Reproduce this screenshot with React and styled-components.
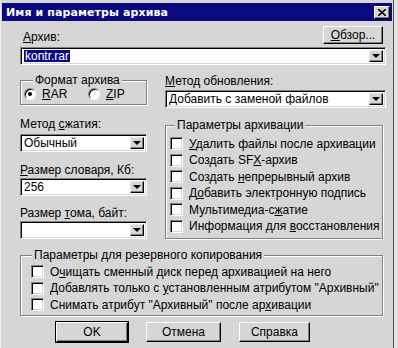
import React from "react";
import styled, { createGlobalStyle } from "styled-components";

const Global = createGlobalStyle`
  html, body { margin: 0; padding: 0; background: #e2e2e2; }
  * { box-sizing: border-box; }
`;

const Window = styled.div`
  width: 394px;
  height: 348px;
  background: #d6d6d6;
  border-left: 1px solid #f0f0f0;
  border-right: 1px solid #505050;
  padding: 3px 1px 0 1px;
  font-family: "Liberation Sans", Arial, sans-serif;
  font-size: 12px;
  color: #000;
  overflow: hidden;
`;

const TitleBar = styled.div`
  height: 18px;
  background: #0a0a80;
  display: flex;
  align-items: center;
  justify-content: space-between;
  padding: 0 2px 0 4px;
`;

const TitleText = styled.span`
  font-family: "DejaVu Sans", Verdana, sans-serif;
  font-weight: bold;
  font-size: 11px;
  color: #fff;
  letter-spacing: 0.1px;
`;

const CloseButton = styled.div`
  width: 16px;
  height: 13px;
  background: #d6d6d6;
  border: 1px solid;
  border-color: #fff #000 #000 #fff;
  box-shadow: inset -1px -1px 0 #808080;
  display: flex;
  align-items: center;
  justify-content: center;
`;

const Content = styled.div`
  padding: 0 6px 0 18px;
`;

const TopRow = styled.div`
  display: flex;
  justify-content: space-between;
  align-items: flex-end;
  margin-top: 5px;
  height: 18px;
`;

const Label = styled.div`
  padding-left: ${(p) => p.$indent || 0}px;
  line-height: 14px;
  margin-top: ${(p) => p.$mt || 0}px;
`;

const Key = styled.span`
  text-decoration: underline;
  text-underline-offset: 1px;
`;

const Button = styled.div`
  width: ${(p) => p.$w}px;
  height: ${(p) => p.$h || 20}px;
  margin-right: ${(p) => p.$mr || 0}px;
  background: #d6d6d6;
  border: 1px solid;
  border-color: #fff #000 #000 #fff;
  box-shadow: inset -1px -1px 0 #808080
    ${(p) => (p.$default ? ", 0 0 0 1px #000" : "")};
  display: flex;
  align-items: center;
  justify-content: center;
  line-height: 14px;
`;

const Field = styled.div`
  height: 18px;
  width: 100%;
  margin-top: ${(p) => p.$mt || 0}px;
  background: #fff;
  border: 1px solid;
  border-color: #808080 #fff #fff #808080;
  box-shadow: inset 1px 1px 0 #000, inset -1px -1px 0 #d6d6d6;
  display: flex;
  align-items: stretch;
  padding: 2px;
`;

const FieldValue = styled.div`
  flex: 1;
  display: flex;
  align-items: center;
  padding-left: 1px;
  white-space: nowrap;
  overflow: hidden;
`;

const Selected = styled.span`
  background: #0a0a80;
  color: #fff;
  padding: 0 1px;
  line-height: 13px;
`;

const DropButton = styled.div`
  width: 14px;
  background: #d6d6d6;
  border: 1px solid;
  border-color: #e8e8e8 #000 #000 #e8e8e8;
  box-shadow: inset -1px -1px 0 #808080;
  display: flex;
  align-items: center;
  justify-content: center;
  &::after {
    content: "";
    border-left: 4px solid transparent;
    border-right: 4px solid transparent;
    border-top: 4px solid #000;
  }
`;

const Columns = styled.div`
  display: flex;
  gap: 18px;
  margin-top: 9px;
`;

const LeftCol = styled.div`
  width: 127px;
  display: flex;
  flex-direction: column;
`;

const RightCol = styled.div`
  flex: 1;
  display: flex;
  flex-direction: column;
`;

const Group = styled.fieldset`
  margin: 0;
  margin-right: ${(p) => p.$mr || 0}px;
  margin-top: ${(p) => p.$mt || 0}px;
  min-inline-size: 0;
  border: 1px solid #808080;
  box-shadow: 1px 1px 0 #fff, inset 1px 1px 0 #fff;
  padding: 0;
  height: ${(p) => p.$h}px;
`;

const Legend = styled.legend`
  margin-left: ${(p) => p.$ml || 10}px;
  padding: 0 2px;
  background: #d6d6d6;
  line-height: 12px;
  position: relative;
  z-index: 1;
`;

const RadioRow = styled.div`
  display: flex;
  align-items: center;
  padding-left: 3px;
  margin-top: 1px;
`;

const RadioItem = styled.label`
  display: flex;
  align-items: center;
  gap: 6px;
  width: ${(p) => p.$w}px;
`;

const RadioCircle = styled.span`
  width: 12px;
  height: 12px;
  border-radius: 50%;
  background: #fff;
  border: 1px solid;
  border-color: #808080 #fff #fff #808080;
  box-shadow: inset 1px 1px 0 #000;
  display: flex;
  align-items: center;
  justify-content: center;
  &::after {
    content: "";
    width: 4px;
    height: 4px;
    border-radius: 50%;
    background: ${(p) => (p.$checked ? "#000" : "transparent")};
  }
`;

const CheckList = styled.div`
  display: flex;
  flex-direction: column;
  gap: ${(p) => p.$gap}px;
  padding-left: ${(p) => p.$pl}px;
  padding-top: ${(p) => p.$pt}px;
`;

const CheckRow = styled.label`
  display: flex;
  align-items: center;
  gap: 6px;
  height: 13px;
  white-space: nowrap;
`;

const CheckBox = styled.span`
  flex: none;
  width: 13px;
  height: 13px;
  background: #fff;
  border: 1px solid;
  border-color: #808080 #fff #fff #808080;
  box-shadow: inset 1px 1px 0 #000, inset -1px -1px 0 #d6d6d6;
`;

const ButtonRow = styled.div`
  display: flex;
  justify-content: center;
  gap: 18px;
  margin-top: 6px;
  padding-right: 40px;
`;

const Combo = ({ children, mt }) => (
  <Field $mt={mt}>
    <FieldValue>{children}</FieldValue>
    <DropButton />
  </Field>
);

const Check = ({ children }) => (
  <CheckRow>
    <CheckBox />
    <span>{children}</span>
  </CheckRow>
);

export default function App() {
  return (
    <>
      <Global />
      <Window>
        <TitleBar>
          <TitleText>Имя и параметры архива</TitleText>
          <CloseButton>
            <svg width="8" height="7" viewBox="0 0 8 7">
              <path d="M0 0 L8 7 M8 0 L0 7" stroke="#000" strokeWidth="1.6" />
            </svg>
          </CloseButton>
        </TitleBar>
        <Content>
          <TopRow>
            <Label $indent={3}>
              <Key>А</Key>рхив:
            </Label>
            <Button $w={60} $h={18} $mr={3}>
              <span>
                <Key>О</Key>бзор...
              </span>
            </Button>
          </TopRow>
          <Combo mt={3}>
            <Selected>kontr.rar</Selected>
          </Combo>

          <Columns>
            <LeftCol>
              <Group $h={31}>
                <Legend $ml={12}>Формат архива</Legend>
                <RadioRow>
                  <RadioItem $w={64}>
                    <RadioCircle $checked />
                    <span>
                      <Key>R</Key>AR
                    </span>
                  </RadioItem>
                  <RadioItem $w={50}>
                    <RadioCircle />
                    <span>
                      <Key>Z</Key>IP
                    </span>
                  </RadioItem>
                </RadioRow>
              </Group>

              <Label $mt={12}>
                Метод <Key>с</Key>жатия:
              </Label>
              <Combo mt={3}>Обычный</Combo>

              <Label $mt={11}>
                <Key>Р</Key>азмер словаря, Кб:
              </Label>
              <Combo mt={1}>256</Combo>

              <Label $mt={10}>
                Размер <Key>т</Key>ома, байт:
              </Label>
              <Combo mt={1}></Combo>
            </LeftCol>

            <RightCol>
              <Label>
                <Key>М</Key>етод обновления:
              </Label>
              <Combo mt={2}>Добавить с заменой файлов</Combo>

              <Group $mt={11} $mr={3} $h={120}>
                <Legend $ml={9}>Параметры архивации</Legend>
                <CheckList $gap={3.6} $pl={4} $pt={6}>
                  <Check>
                    <Key>У</Key>далить файлы после архивации
                  </Check>
                  <Check>
                    Создать SF<Key>X</Key>-архив
                  </Check>
                  <Check>
                    Создать <Key>н</Key>епрерывный архив
                  </Check>
                  <Check>
                    Д<Key>о</Key>бавить электронную подпись
                  </Check>
                  <Check>
                    Мультимедиа-с<Key>ж</Key>атие
                  </Check>
                  <Check>
                    Информация для <Key>в</Key>осстановления
                  </Check>
                </CheckList>
              </Group>
            </RightCol>
          </Columns>

          <Group $mt={10} $mr={3} $h={67}>
            <Legend $ml={11}>Параметры для резервного копирования</Legend>
            <CheckList $gap={3.5} $pl={10} $pt={4}>
              <Check>
                О<Key>ч</Key>ищать сменный диск перед архивацией на него
              </Check>
              <Check>
                Добавлять только с <Key>у</Key>становленным атрибутом "Архивный"
              </Check>
              <Check>
                Снимать атрибут "Архивный" после ар<Key>х</Key>ивации
              </Check>
            </CheckList>
          </Group>

          <ButtonRow>
            <Button $w={72} $default>
              OK
            </Button>
            <Button $w={75}>Отмена</Button>
            <Button $w={71}>Справка</Button>
          </ButtonRow>
        </Content>
      </Window>
    </>
  );
}
